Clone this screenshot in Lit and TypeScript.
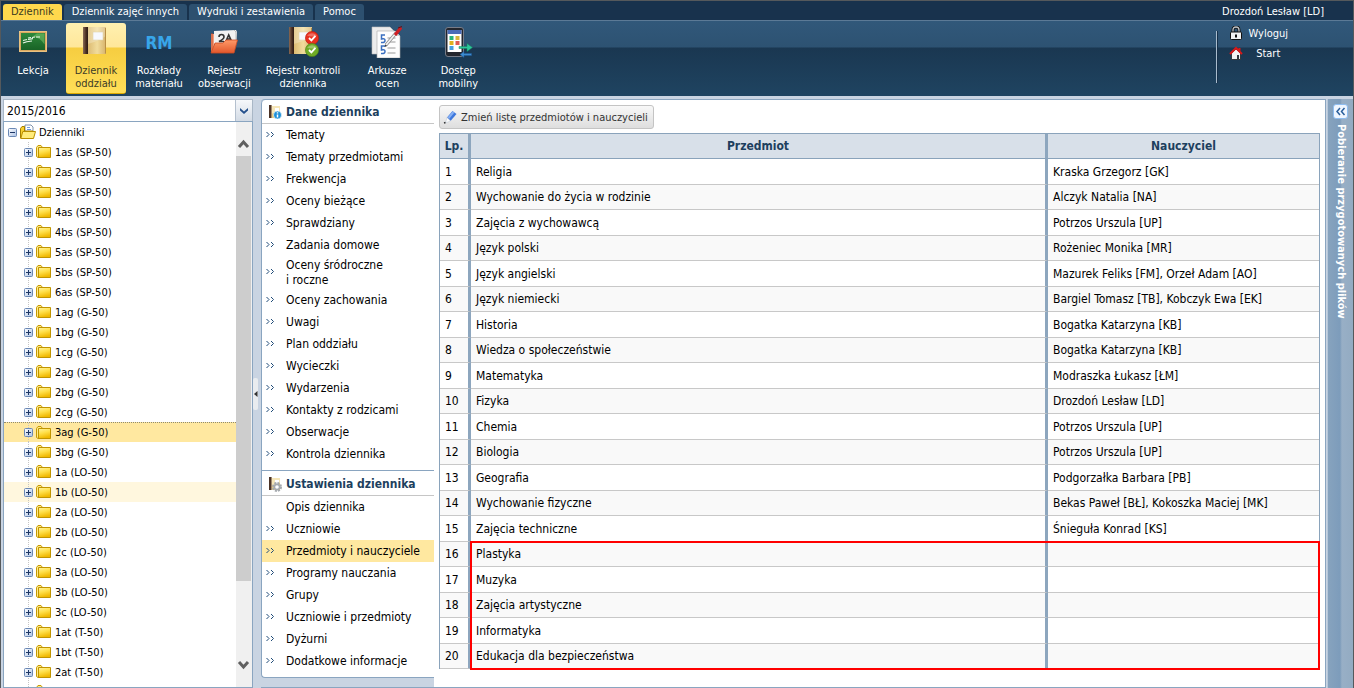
import { LitElement, html, svg, css, nothing } from 'lit';
import { customElement, property, state } from 'lit/decorators.js';
import { classMap } from 'lit/directives/class-map.js';

const TABS = ['Dziennik', 'Dziennik zajęć innych', 'Wydruki i zestawienia', 'Pomoc'];

const TOOLS: { icon: string; lines: string[] }[] = [
  { icon: 'board', lines: ['Lekcja'] },
  { icon: 'book', lines: ['Dziennik', 'oddziału'] },
  { icon: 'rm', lines: ['Rozkłady', 'materiału'] },
  { icon: 'folder', lines: ['Rejestr', 'obserwacji'] },
  { icon: 'control', lines: ['Rejestr kontroli', 'dziennika'] },
  { icon: 'sheets', lines: ['Arkusze', 'ocen'] },
  { icon: 'phone', lines: ['Dostęp', 'mobilny'] },
];

const CLASSES = [
  '1as (SP-50)', '2as (SP-50)', '3as (SP-50)', '4as (SP-50)', '4bs (SP-50)', '5as (SP-50)', '5bs (SP-50)',
  '6as (SP-50)', '1ag (G-50)', '1bg (G-50)', '1cg (G-50)', '2ag (G-50)', '2bg (G-50)', '2cg (G-50)',
  '3ag (G-50)', '3bg (G-50)', '1a (LO-50)', '1b (LO-50)', '2a (LO-50)', '2b (LO-50)', '2c (LO-50)',
  '3a (LO-50)', '3b (LO-50)', '3c (LO-50)', '1at (T-50)', '1bt (T-50)', '2at (T-50)', '2bt (T-50)',
];

const DATA_MENU = [
  'Tematy', 'Tematy przedmiotami', 'Frekwencja', 'Oceny bieżące', 'Sprawdziany', 'Zadania domowe',
  'Oceny śródroczne\ni roczne', 'Oceny zachowania', 'Uwagi', 'Plan oddziału', 'Wycieczki', 'Wydarzenia',
  'Kontakty z rodzicami', 'Obserwacje', 'Kontrola dziennika',
];

const SETTINGS_MENU = [
  'Opis dziennika', 'Uczniowie', 'Przedmioty i nauczyciele', 'Programy nauczania', 'Grupy',
  'Uczniowie i przedmioty', 'Dyżurni', 'Dodatkowe informacje',
];

const SUBJECTS: [string, string][] = [
  ['Religia', 'Kraska Grzegorz [GK]'],
  ['Wychowanie do życia w rodzinie', 'Alczyk Natalia [NA]'],
  ['Zajęcia z wychowawcą', 'Potrzos Urszula [UP]'],
  ['Język polski', 'Rożeniec Monika [MR]'],
  ['Język angielski', 'Mazurek Feliks [FM], Orzeł Adam [AO]'],
  ['Język niemiecki', 'Bargiel Tomasz [TB], Kobczyk Ewa [EK]'],
  ['Historia', 'Bogatka Katarzyna [KB]'],
  ['Wiedza o społeczeństwie', 'Bogatka Katarzyna [KB]'],
  ['Matematyka', 'Modraszka Łukasz [ŁM]'],
  ['Fizyka', 'Drozdoń Lesław [LD]'],
  ['Chemia', 'Potrzos Urszula [UP]'],
  ['Biologia', 'Potrzos Urszula [UP]'],
  ['Geografia', 'Podgorzałka Barbara [PB]'],
  ['Wychowanie fizyczne', 'Bekas Paweł [BŁ], Kokoszka Maciej [MK]'],
  ['Zajęcia techniczne', 'Śnieguła Konrad [KS]'],
  ['Plastyka', ''],
  ['Muzyka', ''],
  ['Zajęcia artystyczne', ''],
  ['Informatyka', ''],
  ['Edukacja dla bezpieczeństwa', ''],
];

const bookShape = svg`
  <rect x="5" y="2" width="22" height="27" fill="url(#cover)"/>
  <path d="M5 2h22v9q-9 6-22 9z" fill="#fff" opacity=".25"/>
  <rect x="4" y="2" width="5" height="27" fill="url(#spine)"/>
  <rect x="14" y="7" width="10" height="8" fill="#f7f9ff" stroke="#e2d3ab" stroke-width=".6"/>
  <path d="M26.500 3v25.500" stroke="#b88f45"/>`;

const bookDefs = svg`<defs>
  <linearGradient id="cover"><stop offset="0" stop-color="#d3ac60"/><stop offset=".6" stop-color="#f1dc9c"/><stop offset="1" stop-color="#d6b26a"/></linearGradient>
  <linearGradient id="spine"><stop offset="0" stop-color="#8a6b55"/><stop offset=".6" stop-color="#4a2f22"/><stop offset="1" stop-color="#2c1a12"/></linearGradient>
  </defs>`;

const ICONS: Record<string, unknown> = {
  board: html`<svg width="32" height="32" viewBox="0 0 32 32"><defs><linearGradient id="g" x2="0" y2="1"><stop offset="0" stop-color="#2f8a3c"/><stop offset="1" stop-color="#176125"/></linearGradient></defs>
    <rect x="3" y="6" width="26" height="19" fill="url(#g)" stroke="#d9a860" stroke-width="2"/><rect x="2.500" y="5.500" width="27" height="20" fill="none" stroke="#f0cd90" stroke-width=".7"/>
    <path d="M20 7.500h7.500v11q-4-7-12-8z" fill="#7cc56a" opacity=".55"/>
    <path d="M6 14.500l4-1M11 12l3-.500M15 11.500l3-.500M19 11h4M6 17q3-1.500 9-2M11 13.500l5-.800" stroke="#e8f6e8" stroke-width="1.200" fill="none"/></svg>`,
  book: html`<svg width="32" height="32" viewBox="0 0 32 32">${bookDefs}<g transform="translate(-1 -1)">${bookShape}</g></svg>`,
  rm: html`<span class="rm">RM</span>`,
  folder: html`<svg width="32" height="32" viewBox="0 0 32 32"><defs><linearGradient id="f" x2="0" y2="1"><stop offset="0" stop-color="#ff9a68"/><stop offset="1" stop-color="#e2572c"/></linearGradient></defs>
    <path d="M3 8h3v18H3z" fill="#f2a081"/><path d="M4 27V7" stroke="#c8471f"/>
    <path d="M6 5l22-1 1 2-1 12H6z" fill="#f2f2f2"/><path d="M26 4l2 2v8" stroke="#bbb" fill="none"/>
    <path d="M11 11q0-2.500 2.500-2.500T16 11q0 2-5 4.500h5M18 15l2.700-6 2.800 6M19 13h4" stroke="#333" stroke-width="1.600" fill="none"/>
    <path d="M3 27l4-10h8l3-3h11.500L26 27z" fill="url(#f)" stroke="#cf4c22" stroke-width=".8"/></svg>`,
  control: html`<svg width="32" height="32" viewBox="0 0 32 32">${bookDefs}<g transform="translate(-2 -1)">${bookShape}</g>
    <circle cx="25" cy="12" r="6.600" fill="#e8301f" stroke="#b81c10" stroke-width=".6"/><path d="M20 9.500q5-4.500 10 0-5 2-10 0z" fill="#fff" opacity=".3"/><path d="M22 12l2.400 2.400 4-4.500" stroke="#fff" stroke-width="1.900" fill="none"/>
    <circle cx="25" cy="24" r="6.600" fill="#6fab26" stroke="#4b8314" stroke-width=".6"/><path d="M20 21.500q5-4.500 10 0-5 2-10 0z" fill="#fff" opacity=".3"/><path d="M22 24l2.400 2.400 4-4.500" stroke="#fff" stroke-width="1.900" fill="none"/></svg>`,
  sheets: html`<svg width="32" height="32" viewBox="0 0 32 32">
    <path d="M1 1h18l4 4v23H1z" fill="#ececec" stroke="#bdbdbd" stroke-width=".6"/>
    <path d="M6 5h18l5 5v22H6z" fill="#fdfdfd" stroke="#aaa" stroke-width=".6"/><path d="M24 5v5h5z" fill="#d0d0d0"/>
    <path d="M14 9h-3.500v4q3.500-1 3.500 1.500t-4 2M14 20h-3.500v4q3.500-1 3.500 1.500t-4 2" stroke="#3a6fc0" stroke-width="1.500" fill="none"/>
    <path d="M16.500 12h8M16.500 16h8M16.500 22h8M16.500 27h8" stroke="#999"/>
    <path d="M15 19l10-12" stroke="#888" stroke-width="3.200"/><path d="M15 19l10-12" stroke="#f2f2f2" stroke-width="1.800"/>
    <path d="M24 9l6-7.500" stroke="#cf1f24" stroke-width="3.200"/><path d="M27 2l4-1.500" stroke="#651015"/><path d="M13.500 21l2.600-1-1.600-1.500z" fill="#222"/></svg>`,
  phone: html`<svg width="32" height="32" viewBox="0 0 32 32">
    <rect x="3.500" y="1.500" width="18" height="29" rx="2.500" fill="#23262e" stroke="#777c88"/>
    <rect x="5.500" y="4" width="14" height="22" fill="#fff"/><rect x="5.500" y="4" width="14" height="4" fill="#4a6cb8"/>
    <path d="M7.500 10h4v4h-4z" fill="#28b57c"/><path d="M13.500 10h4v4h-4z" fill="#d7b53c"/><path d="M7.500 15h4v4h-4z" fill="#e0b020"/><path d="M13.500 15h4v4h-4z" fill="#e05a52"/><path d="M7.500 20h4v4h-4z" fill="#4aa0e0"/>
    <path d="M17 20.500h8v-3l5.500 4-5.500 4v-3h-8z" fill="#2cc79a" stroke="#17835f" stroke-width=".5"/>
    <path d="M29.500 27.500H22v-2l-4 3 4 3v-2h7.500z" fill="#3c8bd0" stroke="#1e5a98" stroke-width=".5"/></svg>`,
};

@customElement('menu-section')
export class MenuSection extends LitElement {
  @property() heading = '';
  @property() badge = '';
  @property({ attribute: false }) items: string[] = [];
  @property() current = '';
  @property() plain = '';

  static styles = css`
    :host { display: block; }
    .head { display: flex; align-items: center; gap: 4px; height: 23px; padding-left: 5px; margin: 0; border-bottom: 1px solid #c6c6c6; color: #1d3f5e; font-size: 12px; font-weight: bold; white-space: nowrap; }
    .list { list-style: none; margin: 0; padding: 0 0 5px; }
    .item { display: grid; grid-template-columns: 20px 1fr; align-items: center; min-height: 22px; line-height: 15px; padding-left: 4px; }
    .item.tall { min-height: 33px; }
    .item.current { background: #ffe8a0; }
    .mark { display: block; }
    a { grid-column: 2; color: #000; text-decoration: none; white-space: pre; }
  `;

  render() {
    return html`
      <h2 class="head">
        <svg width="15" height="16" viewBox="0 0 15 16">
          <path d="M3 2h10v12H3z" fill="#e8c97c"/><path d="M4 2h9v5l-9 3z" fill="#f6e6b8"/><path d="M8 4h4v4H8z" fill="#fff"/><path d="M2 1h2v13H2z" fill="#4c3326"/><path d="M4.500 14V1" stroke="#a08a70"/>
          ${this.badge === 'info'
            ? svg`<circle cx="10.500" cy="11" r="4" fill="#1c8fd8" stroke="#fff" stroke-width=".6"/><path d="M10.500 10.500v3M10.500 8.300v1.200" stroke="#fff" stroke-width="1.500"/>`
            : svg`<circle cx="10" cy="11" r="4" fill="none" stroke="#a5a9ae" stroke-width="2" stroke-dasharray="2 1.140"/><circle cx="10" cy="11" r="2.600" fill="#fff" stroke="#a5a9ae" stroke-width="1.600"/>`}
        </svg>
        ${this.heading}
      </h2>
      <ul class="list">
        ${this.items.map((item) => html`
          <li class=${classMap({ item: true, tall: item.includes('\n'), current: item === this.current })}>
            ${item === this.plain ? nothing : html`<svg class="mark" width="9" height="9" viewBox="0 0 9 9"><path d="M.500 1l2.500 2.500L.500 6M5 1l2.500 2.500L5 6" fill="none" stroke="#1f4b78" stroke-width="1"/></svg>`}
            <a href="#">${item}</a>
          </li>`)}
      </ul>`;
  }
}

@customElement('class-tree')
export class ClassTree extends LitElement {
  @state() selected = '3ag (G-50)';

  static styles = css`
    :host { display: grid; grid-template-columns: minmax(0, 1fr) 16px; grid-template-rows: minmax(0, 1fr); min-height: 0; overflow: hidden; border: 1px solid #8aa5c0; background: #fff; font-size: 11px; }
    .nodes { min-height: 0; overflow: hidden; list-style: none; margin: 0; padding: 0; }
    .node { display: flex; align-items: center; box-sizing: border-box; height: 20px; padding-left: 20px; cursor: pointer; white-space: nowrap;
      background: linear-gradient(#c4c4c4 50%, transparent 50%) 24px 0 / 1px 2px repeat-y; }
    .root { padding-left: 4px; background: none; }
    .selected { background-color: #ffe8a0; border-top: 1px dotted #8f8a70; }
    .hovered { background-color: #fff7de; }
    .exp { margin-right: 3px; }
    .fold { margin-right: 4px; }
    .root .fold { margin-right: 3px; }
    .scroll { display: flex; flex-direction: column; align-items: stretch; background: #f0f0f0; min-height: 0; padding: 15px 0; }
    .thumb { flex: 1; min-height: 0; margin: 7px 1px 79px 0; background: #cdcdcd; }
    .scroll svg { display: block; }
  `;

  private expander(open: boolean) {
    return html`<svg class="exp" width="9" height="9" viewBox="0 0 9 9"><defs><linearGradient id="e" x2="1" y2="1"><stop offset="0" stop-color="#fff"/><stop offset="1" stop-color="#a9c0e4"/></linearGradient></defs>
      <rect x=".500" y=".500" width="8" height="8" rx="1" fill="url(#e)" stroke="#6a88b4"/><path d=${open ? 'M2 4.500h5' : 'M2 4.500h5M4.500 2v5'} stroke="#1d3766"/></svg>`;
  }

  render() {
    return html`
      <ul class="nodes" role="tree">
        <li class="node root" role="treeitem">
          ${this.expander(true)}
          <svg class="fold" width="16" height="16" viewBox="0 0 16 16"><path d="M5 8V1h6l2 2v5" fill="#fff" stroke="#7f93ad"/><path d="M7 3.500h3M7 5.500h4" stroke="#6f9be0"/><path d="M.500 14V4.500l1.500-2h2.500V7H13v7z" fill="#f7d030" stroke="#a67f00"/><path d="M.800 14.500l2-7h12.700l-2 7z" fill="#ffec7c" stroke="#b98f00"/></svg>
          Dzienniki
        </li>
        ${CLASSES.map((name) => html`
          <li class=${classMap({ node: true, selected: name === this.selected, hovered: name === '1b (LO-50)' })} role="treeitem" @click=${() => (this.selected = name)}>
            ${this.expander(false)}
            <svg class="fold" width="15" height="14" viewBox="0 0 15 14"><defs><linearGradient id="y" x2=".300" y2="1"><stop offset="0" stop-color="#fff3a0"/><stop offset=".5" stop-color="#ffe04a"/><stop offset="1" stop-color="#f0b800"/></linearGradient></defs>
              <path d="M.500 11.500V2.500l1.500-2h3l1.500 2v10H2z" fill="#ffe98a" stroke="#c79a00"/><path d="M2.500 2.500h12v10h-12z" fill="url(#y)" stroke="#c09400"/></svg>
            ${name}
          </li>`)}
      </ul>
      <div class="scroll" aria-hidden="true">
        <svg width="15" height="12" viewBox="0 0 15 12"><path d="M3 10l4.500-5 4.500 5" fill="none" stroke="#606060" stroke-width="3"/></svg>
        <div class="thumb"></div>
        <svg width="15" height="12" viewBox="0 0 15 12"><path d="M3 2l4.500 5L12 2" fill="none" stroke="#606060" stroke-width="3"/></svg>
      </div>`;
  }
}

@customElement('subject-table')
export class SubjectTable extends LitElement {
  static styles = css`
    :host { display: block; position: relative; }
    table { width: 100%; border-collapse: separate; border-spacing: 0; table-layout: fixed; border: 1px solid #8aa3bb; border-bottom: 0; box-sizing: border-box; }
    .c-no { width: 31px; }
    .c-teacher { width: 271px; }
    th, td { box-sizing: border-box; padding: 1px 5px 0; font-size: 12px; line-height: 15px; white-space: nowrap; overflow: hidden; }
    th { height: 25px; background: #d8e0e9; color: #1d3f5e; border-bottom: 1px solid #8aa3bb; }
    th:first-child { padding: 1px 0 0; }
    td { height: 25px; border-bottom: 1px solid #c8c8c8; }
    tr:nth-child(odd) td { height: 26px; }
    tr:nth-child(even) td { background: #f9f9f9; }
    th:not(:last-child), td:not(:last-child) { border-right: 3px solid #8da6be; }
    .marked { position: absolute; left: 31px; right: 0; bottom: -1px; height: 129px; box-sizing: border-box; border: 2px solid #f00; pointer-events: none; }
  `;

  render() {
    return html`
      <table>
        <colgroup><col class="c-no" /><col /><col class="c-teacher" /></colgroup>
        <thead><tr><th>Lp.</th><th>Przedmiot</th><th>Nauczyciel</th></tr></thead>
        <tbody>${SUBJECTS.map(([name, teacher], i) => html`<tr><td>${i + 1}</td><td>${name}</td><td>${teacher}</td></tr>`)}</tbody>
      </table>
      <div class="marked"></div>`;
  }
}

@customElement('app-root')
export class AppRoot extends LitElement {
  @state() tab = 'Dziennik';
  @state() tool = 'book';

  static styles = css`
    :host { display: flex; flex-direction: column; height: 100vh; box-sizing: border-box; overflow: hidden; border: solid #55595c; border-width: 1px 1px 0 1px; background: #c9d4e2; color: #000; font: 12px "DejaVu Sans Condensed", "DejaVu Sans", sans-serif; }
    button, select { font: inherit; }
    .top { display: flex; justify-content: space-between; height: 19px; background: #18324d; border-bottom: 1px solid #5c7a96; color: #fff; font-size: 11px; }
    .tabs { display: flex; align-items: flex-end; gap: 2px; padding-left: 2px; }
    .tab { height: 16px; padding: 0 8px; border: 0; border-radius: 3px 3px 0 0; background: #2d506f; color: #fff; line-height: 16px; }
    .tab.active { background: #ffd84d; color: #3a3a20; }
    .user { padding-right: 29px; line-height: 22px; }
    .ribbon { display: flex; justify-content: space-between; height: 75px; background: linear-gradient(#31587a 0, #2d5272 26px, #1a3751 27px, #1f4461 100%); color: #fff; font-size: 11px; line-height: 13px; }
    .tools { display: flex; align-items: flex-start; gap: 3px; padding: 2px 2px 0; }
    .tool { display: flex; flex-direction: column; align-items: center; min-width: 60px; height: 71px; padding: 3px 6px 0; border: 0; border-radius: 3px; background: none; color: #fff; white-space: nowrap; }
    .tool.active { background: linear-gradient(#fff0b0 0, #ffe79a 24px, #f6cd40 25px, #ffdf58 100%); color: #3c3c28; border-bottom: 1px solid #dba800; }
    .tool.wide { min-width: 76px; }
    .tool svg, .rm { display: block; margin-bottom: 6px; }
    .rm { height: 32px; line-height: 34px; font-size: 17px; font-weight: bold; color: #38a6ea; }
    .session { display: flex; align-self: flex-start; gap: 11px; margin: 10px 65px 0 0; }
    .rule { width: 2px; height: 52px; background: linear-gradient(90deg, #a9bccd 50%, #16304a 50%); }
    .links { display: grid; grid-template-columns: 14px 1fr; grid-auto-rows: 14px; gap: 6px 5px; align-items: center; text-align: center; margin-top: -5px; }
    .links svg { display: block; }
    .links a { color: #fff; text-decoration: none; }
    .main { flex: 1; min-height: 0; display: grid; grid-template-columns: 250px 8px minmax(0, 1fr) 1px 26px; padding: 3px 0 0 2px; }
    .left { display: flex; flex-direction: column; min-height: 0; }
    .combo { display: grid; grid-template-columns: minmax(0, 1fr) 17px; height: 22px; box-sizing: border-box; border: 1px solid #a9b7c6; border-bottom: 0; }
    .combo select { grid-area: 1 / 1 / 2 / 3; appearance: none; width: 100%; border: 0; border-radius: 0; background: #fff; padding: 0 3px; color: #000; outline: 0; }
    .trigger { grid-area: 1 / 2; pointer-events: none; border-left: 1px solid #b4c0ce; background: linear-gradient(#f6f8fb, #d3dbe5); z-index: 1; }
    class-tree { flex: 1; }
    .split { display: flex; align-items: center; }
    .handle { display: block; width: 5px; height: 32px; border: 0; border-radius: 2px; padding: 0; background: #e9ecef; }
    .work { min-height: 0; overflow: hidden; display: grid; grid-template-columns: 173px minmax(0, 1fr); box-sizing: border-box; border: 1px solid #8aa5c0; border-left: 0; border-radius: 4px 0 0 0; background: #c9d4e2; }
    .menu { align-self: start; background: #fff; border: solid #8aa5c0; border-width: 0 0 1px 1px; border-radius: 4px 0 0 4px; }
    .menu menu-section + menu-section { border-top: 1px solid #8aa5c0; padding-top: 1px; }
    .content { background: #fff; padding: 5px; }
    .change { display: flex; align-items: center; gap: 4px; height: 24px; margin-bottom: 4px; padding: 0 5px 0 3px; border: 1px solid #c4c4c4; border-radius: 3px; background: linear-gradient(#f8f8f8, #dedede); color: #333; font-size: 11px; white-space: nowrap; }
    .files { display: flex; flex-direction: column; align-items: center; gap: 5px; padding-top: 5px; border-left: 1px solid #b7c8da; background: linear-gradient(90deg, #87a3be 0, #7d9cbb 12px, #98afc6 14px, #93abc2 100%); color: #fff; font-size: 11px; font-weight: bold; }
    .toggle { width: 15px; height: 15px; padding: 0; border: 1px solid #8fbdf0; border-radius: 3px; background: #eff6ff; }
    .toggle svg, .handle svg, .trigger svg { display: block; }
    .vertical { writing-mode: vertical-rl; line-height: 14px; white-space: nowrap; }
  `;

  render() {
    return html`
      <header class="top">
        <nav class="tabs">
          ${TABS.map((t) => html`<button class=${classMap({ tab: true, active: t === this.tab })} @click=${() => (this.tab = t)}>${t}</button>`)}
        </nav>
        <span class="user">Drozdoń Lesław [LD]</span>
      </header>
      <div class="ribbon">
        <div class="tools">
          ${TOOLS.map((t) => html`
            <button class=${classMap({ tool: true, active: t.icon === this.tool, wide: t.icon === 'sheets' })} @click=${() => (this.tool = t.icon)}>
              ${ICONS[t.icon]}
              ${t.lines.map((line) => html`<span>${line}</span>`)}
            </button>`)}
        </div>
        <div class="session">
          <span class="rule"></span>
          <div class="links">
            <svg width="14" height="14" viewBox="0 0 14 14"><path d="M4 7V4q0-3 3-3t3 3v3" fill="none" stroke="#111" stroke-width="3"/><path d="M4 7V4q0-3 3-3t3 3v3" fill="none" stroke="#bfc4c8" stroke-width="1.300"/><rect x="1.500" y="6" width="11" height="7.500" rx="1" fill="#f2f2f2" stroke="#111"/><path d="M7 8.500v3" stroke="#111" stroke-width="2"/></svg>
            <a href="#">Wyloguj</a>
            <svg width="14" height="14" viewBox="0 0 14 14"><path d="M2.500 7v6.500h9V7L7 3z" fill="#f2f2f2" stroke="#222" stroke-width=".8"/><path d="M8 9h2v4.500H8z" fill="#31383e"/><path d="M1 8l6-6 6 6M10.500 5V2" fill="none" stroke="#d81818" stroke-width="2"/></svg>
            <a href="#">Start</a>
          </div>
        </div>
      </div>
      <div class="main">
        <div class="left">
          <div class="combo">
            <select aria-label="Rok szkolny"><option>2015/2016</option></select>
            <span class="trigger"><svg width="16" height="21" viewBox="0 0 16 21"><path d="M4 8l4 3.500L12 8v2.500L8 14 4 10.500z" fill="#24508c"/></svg></span>
          </div>
          <class-tree></class-tree>
        </div>
        <div class="split"><button class="handle" aria-label="Zwiń panel"><svg width="5" height="8" viewBox="0 0 5 8"><path d="M4.500 1v6L1 4z" fill="#333"/></svg></button></div>
        <div class="work">
          <nav class="menu">
            <menu-section heading="Dane dziennika" badge="info" .items=${DATA_MENU}></menu-section>
            <menu-section heading="Ustawienia dziennika" badge="gear" plain="Opis dziennika" current="Przedmioty i nauczyciele" .items=${SETTINGS_MENU}></menu-section>
          </nav>
          <main class="content">
            <button class="change">
              <svg width="14" height="14" viewBox="0 0 14 14"><path d="M4 7.500l5.500-6.500 4 3-6 7z" fill="#3f78dc"/><path d="M5.500 8l5-6" stroke="#86b0f4" stroke-width="2"/><path d="M4 7.500l3.500 3.500-5 2z" fill="#fbfbfb" stroke="#b9c4d4" stroke-width=".5"/><path d="M1 13l1.500-.500" stroke="#333" stroke-width="1.500"/></svg>
              Zmień listę przedmiotów i nauczycieli
            </button>
            <subject-table></subject-table>
          </main>
        </div>
        <span></span>
        <aside class="files">
          <button class="toggle" aria-label="Rozwiń panel"><svg width="13" height="13" viewBox="0 0 13 13"><path d="M6 3L3 6.500 6 10M10.500 3l-3 3.500 3 3.500" fill="none" stroke="#2a5f9c" stroke-width="1.500"/></svg></button>
          <span class="vertical">Pobieranie przygotowanych plików</span>
        </aside>
      </div>`;
  }
}
